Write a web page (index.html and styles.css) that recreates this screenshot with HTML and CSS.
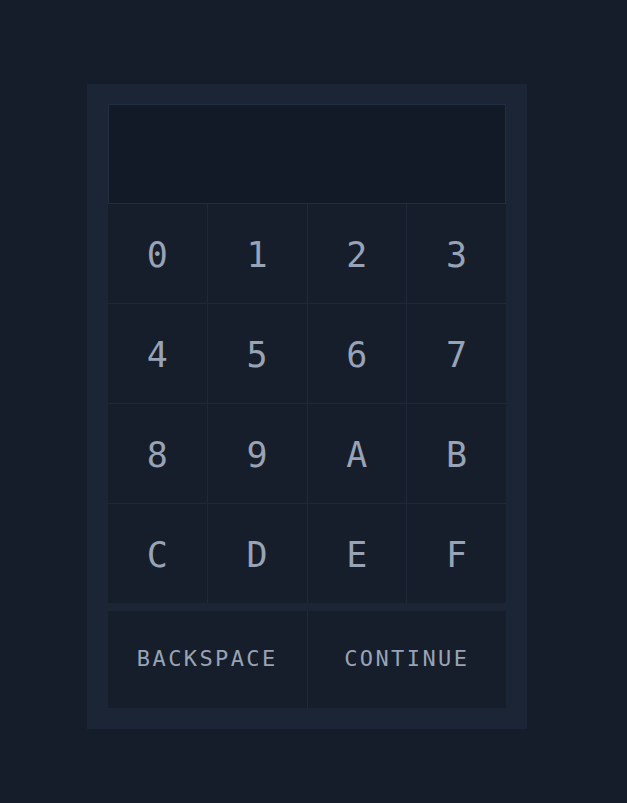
FILE: index.html
```html
<!DOCTYPE html>
<html>
<head>
<meta charset="utf-8">
<link rel="stylesheet" href="styles.css">
</head>
<body>
<div class="panel">
  <div class="display"></div>
  <div class="keys">
    <button class="key">0</button><button class="key">1</button><button class="key">2</button><button class="key">3</button>
    <button class="key">4</button><button class="key">5</button><button class="key">6</button><button class="key">7</button>
    <button class="key">8</button><button class="key">9</button><button class="key">A</button><button class="key">B</button>
    <button class="key">C</button><button class="key">D</button><button class="key">E</button><button class="key">F</button>
  </div>
  <div class="actions">
    <button class="action">BACKSPACE</button>
    <button class="action">CONTINUE</button>
  </div>
</div>
</body>
</html>
```
FILE: styles.css
```css
html, body {
  margin: 0;
  padding: 0;
  background: #151c2a;
  font-family: "DejaVu Sans Mono", monospace;
}
.panel {
  margin: 84px 0 0 87px;
  width: 398px;
  padding: 20px 21px 21px 21px;
  background: #1c2536;
}
.display {
  box-sizing: border-box;
  height: 100px;
  background: #121a27;
  border: 1px solid #222d3f;
}
.keys {
  display: grid;
  grid-template-columns: repeat(4, 1fr);
  grid-auto-rows: 99px;
  gap: 1px;
  background: #1f2839;
}
.key, .action {
  border: 0;
  margin: 0;
  padding: 0;
  background: #161e2c;
  color: #98a3b5;
  font-family: "DejaVu Sans Mono", monospace;
  display: flex;
  align-items: center;
  justify-content: center;
}
.key {
  font-size: 35px;
  padding-top: 2px;
}
.actions {
  margin-top: 8px;
  display: grid;
  grid-template-columns: 1fr 1fr;
  grid-auto-rows: 97px;
  gap: 1px;
  background: #1f2839;
}
.action {
  font-size: 22px;
  letter-spacing: 2.4px;
  padding-bottom: 2px;
}
```
